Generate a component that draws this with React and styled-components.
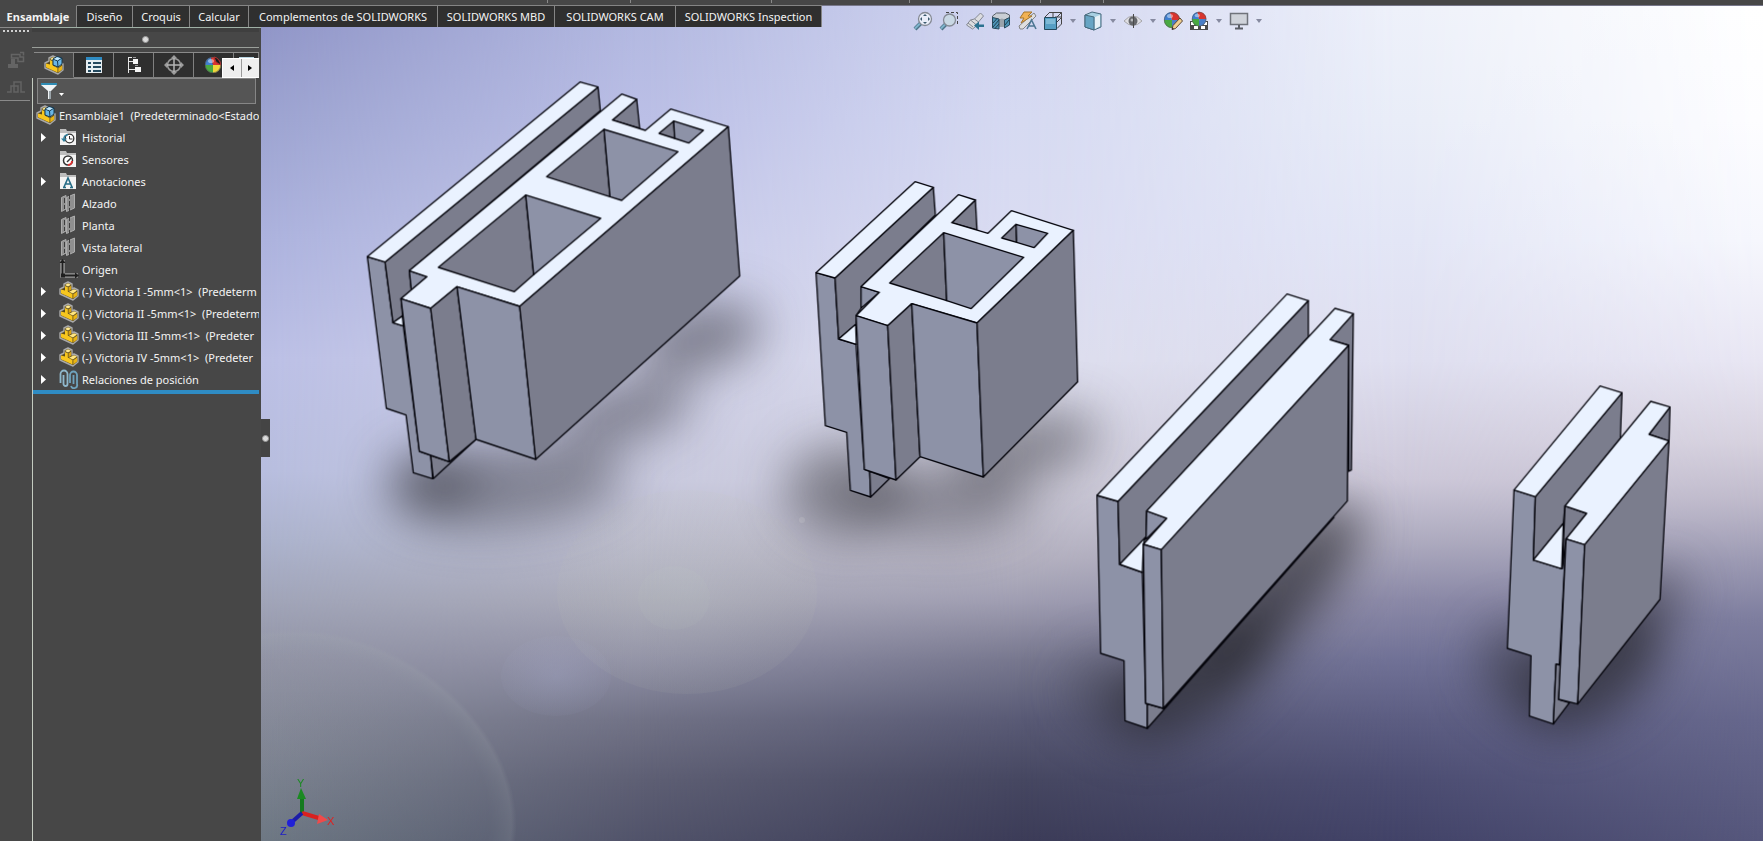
import React from 'react';
import styled, { createGlobalStyle } from 'styled-components';

const GlobalStyle = createGlobalStyle`
  * {
    box-sizing: border-box;
  }
  html, body, #root {
    height: 100%;
  }
  body {
    margin: 0;
    overflow: hidden;
    background: #474747;
    color: #f4f4f4;
    font-family: "Noto Sans", "Open Sans", sans-serif;
    font-size: 11px;
  }
  button, input {
    font: inherit;
    color: inherit;
    border: none;
    padding: 0;
    margin: 0;
    background: transparent;
  }
  svg {
    display: block;
  }
`;

const Window = styled.div`
  display: grid;
  grid-template-columns: 32px 229px minmax(0, 1fr);
  grid-template-rows: 5px 22px minmax(0, 1fr);
  height: 100%;
`;

const RibbonEdge = styled.div`
  grid-area: 1 / 1 / 2 / -1;
  display: flex;
  background: #474747;
`;

const RibbonGroup = styled.span`
  width: ${({ $width }) => $width}px;
  height: 3px;
  border-right: 1px solid #8a8a8a;
`;

const CommandTabs = styled.nav`
  grid-area: 2 / 1 / 3 / -1;
  justify-self: start;
  display: flex;
  z-index: 1;
`;

const CommandTab = styled.button`
  width: ${({ $width }) => $width}px;
  height: 22px;
  border-top: 1px solid ${({ $active }) => ($active ? '#474747' : '#858585')};
  border-right: 1px solid #858585;
  background: ${({ $active }) => ($active ? '#474747' : '#2f2f2f')};
  font-weight: ${({ $active }) => ($active ? 'bold' : 'normal')};
  white-space: nowrap;
`;

const SideToolbar = styled.div`
  grid-area: 3 / 1 / 4 / 2;
  display: flex;
  flex-direction: column;
  align-items: center;
  border-top: 1px solid #8a8a8a;
`;

const Grip = styled.div`
  width: 27px;
  height: 2px;
  margin-top: 2px;
  margin-bottom: 14px;
  background: repeating-linear-gradient(90deg, #d0d0d0 0 2px, transparent 2px 4px);
`;

const SideButton = styled.button`
  height: 27px;
`;

const SideRule = styled.div`
  align-self: stretch;
  height: 1px;
  margin-right: 2px;
  background: #8a8a8a;
`;

const FeaturePanel = styled.aside`
  grid-area: 3 / 2 / 4 / 3;
  display: flex;
  flex-direction: column;
  padding-right: 2px;
  border-top: 1px solid #9fb0a5;
  overflow: hidden;
`;

const PanelHeader = styled.div`
  display: flex;
  justify-content: center;
  align-items: center;
  height: 20px;
  border-top: 4px solid #3f3f3f;
  border-bottom: 1px solid #9a9f9a;
`;

const Dot = styled.span`
  width: 7px;
  height: 7px;
  border: 1px solid #9a9a9a;
  border-radius: 50%;
  background: #dcdcdc;
`;

const ManagerTabs = styled.div`
  display: flex;
  height: 26px;
  margin-top: 4px;
  margin-left: 2px;
  border-top: 1px solid #8a8a8a;
`;

const ManagerTab = styled.button`
  flex: none;
  display: flex;
  justify-content: center;
  align-items: center;
  width: ${({ $cut }) => ($cut ? 25 : 40)}px;
  border-right: 1px solid #808080;
  border-bottom: 1px solid ${({ $active }) => ($active ? '#474747' : '#808080')};
  background: ${({ $active }) => ($active ? '#474747' : '#2f2f2f')};
  overflow: hidden;
`;

const TabScroll = styled.div`
  display: flex;
  gap: 1px;
  position: absolute;
  left: 222px;
  top: 58px;
  width: 37px;
  height: 20px;
  background: #9a9a9a;
  border: 1px solid #ffffff;
  border-right: none;
`;

const ScrollButton = styled.button`
  flex: 1;
  display: flex;
  justify-content: center;
  align-items: center;
  background: #efefef;
`;

const TreeArea = styled.div`
  flex: 1;
  border-left: 1px solid #c3cbc0;
`;

const FilterBox = styled.label`
  display: flex;
  align-items: center;
  height: 26px;
  margin: 0 3px 0 4px;
  padding-left: 2px;
  border: 1px solid #868686;
  background: #555555;
`;

const FilterInput = styled.input`
  flex: 1;
  min-width: 0;
  height: 20px;
  outline: none;
`;

const Tree = styled.ul`
  margin: 0;
  padding: 0;
  list-style: none;
  border-bottom: 4px solid #2f8cc4;
`;

const TreeRow = styled.li`
  display: flex;
  align-items: center;
  height: 22px;
  padding-left: ${({ $root }) => ($root ? 3 : 8)}px;
  white-space: pre;
  overflow: hidden;
`;

const Expander = styled.button`
  flex: none;
  width: 18px;
  height: 16px;
`;

const RowIcon = styled.span`
  flex: none;
  width: 23px;
`;

const Viewport = styled.main`
  grid-area: 2 / 3 / 4 / 4;
  display: grid;
  grid-template-rows: minmax(0, 1fr);
  grid-template-columns: minmax(0, 1fr);
  border-top: 1px solid #77778a;
  overflow: hidden;
`;

const Scene = styled.svg`
  grid-area: 1 / 1;
  width: 100%;
  height: 100%;
`;

const ViewToolbar = styled.div`
  grid-area: 1 / 1;
  align-self: start;
  z-index: 1;
  display: flex;
  padding-top: 5px;
  padding-left: 43.4%;
`;

const ViewButton = styled.button`
  width: 20px;
  height: 20px;

  & + & {
    margin-left: 6px;
  }
`;

const CaretButton = styled.button`
  display: flex;
  justify-content: center;
  align-items: center;
  width: 20px;
  height: 20px;
`;

const PanelHandle = styled.button`
  grid-area: 3 / 3 / 4 / 4;
  justify-self: start;
  z-index: 1;
  display: flex;
  justify-content: center;
  align-items: center;
  width: 9px;
  height: 38px;
  margin-top: 392px;
  background: #444444;
`;

/* ---------- icons ---------- */

const PartShape = () => (
  <>
    <path d="M1 8 L5 6 L5 3 L9 1 L13 3 L13 8 L15 7 L19 9 L19 15 L14 19 L1 13 Z" fill="#5a4a1c" stroke="#a9a9a9" strokeWidth="1.400" strokeLinejoin="round" />
    <path d="M6 4 L9 2.200 L12 3.800 L9 5.500 Z" fill="#ffe98f" />
    <path d="M6 5 L8.800 6.300 L8.800 10.500 L13.500 13 L13.500 17.500 L2 12.300 L2 8.500 L6 9.500 Z" fill="#f7c61e" />
    <path d="M9.500 6.300 L12.200 4.800 L12.200 8.800 L9.500 10.200 Z" fill="#dba410" />
    <path d="M10 10.800 L15 8.200 L18 9.600 L14 12.400 Z" fill="#ffe680" />
    <path d="M14.300 13.200 L18.200 10.500 L18.200 14.600 L14.300 17.600 Z" fill="#e9b414" />
  </>
);

const PartIcon = () => (
  <svg width="20" height="20" viewBox="0 0 20 20"><PartShape /></svg>
);

const AssemblyIcon = () => (
  <svg width="20" height="20" viewBox="0 0 20 20">
    <PartShape />
    <path d="M9 4 L13 1.500 L18 3 L18 9 L14 12 L9 10 Z" fill="#6bb7e6" stroke="#17384d" />
    <path d="M9 4 L13.500 6 L18 3 M13.500 6 L14 12" fill="none" stroke="#17384d" />
    <path d="M10 4 L13 2.300 L16.800 3.200 L13.500 5.200 Z" fill="#c5e7fa" />
  </svg>
);

const PropertyIcon = () => (
  <svg width="18" height="18" viewBox="0 0 18 18">
    <path d="M1 1h16v16H1z" fill="#e6eef2" />
    <path d="M1 1h16v3H1z" fill="#2f8cc4" />
    <path d="M3 6h3v2H3zM3 10h3v2H3zM3 14h3v2H3zM8 6h8v2H8zM8 10h8v2H8zM8 14h8v2H8z" fill="#23495f" />
  </svg>
);

const ConfigIcon = () => (
  <svg width="18" height="18" viewBox="0 0 18 18">
    <path d="M3.500 1v16M3.500 5.500H9M3.500 13.500H11M3.500 1.500H7" fill="none" stroke="#e6e6e6" />
    <path d="M8 3h5v5H8zM10 11h6v5h-6z" fill="#f5f5f5" />
    <path d="M8 1.500h3M10 9.500h3" stroke="#9a9a9a" />
  </svg>
);

const DimIcon = () => (
  <svg width="20" height="20" viewBox="0 0 20 20" fill="none">
    <circle cx="10" cy="10" r="6.500" stroke="#9c9c9c" strokeWidth="1.500" />
    <path d="M10 1v18M1 10h18" stroke="#b5b5b5" strokeWidth="1.500" />
    <path d="M10 0l3 3H7zM10 20l3-3H7zM0 10l3-3v6zM20 10l-3-3v6z" fill="#9c9c9c" />
  </svg>
);

const Ball = ({ corner = '#f0d73a' }) => (
  <>
    <path d="M9 9 L1 9 A8 8 0 0 1 7 1.200 Z" fill="#3f7fd0" />
    <path d="M9 9 L7 1.200 A8 8 0 0 1 17 9 Z" fill="#d8342f" />
    <path d="M9 9 L1 9 A8 8 0 0 0 9 17 Z" fill="#49a942" />
    <path d="M9 9 L17 9 A8 8 0 0 1 9 17 Z" fill={corner} />
    <circle cx="9" cy="9" r="7.700" fill="none" stroke="#555" strokeOpacity="0.6" />
    <ellipse cx="7" cy="5" rx="3" ry="2" fill="#fff" opacity="0.45" />
  </>
);

const DisplayIcon = () => (
  <svg width="20" height="18" viewBox="0 0 20 18">
    <Ball />
    <path d="M10 1a8 8 0 0 1 6.500 8L12 6z" fill="#1b1b1b" stroke="#b03030" />
  </svg>
);

const CamIcon = () => (
  <svg width="16" height="18" viewBox="0 0 16 18">
    <path d="M1 1h15v3H1z" fill="#b9d5e2" />
    <path d="M1 5h15v12H1z" fill="#8a949a" />
  </svg>
);

const FunnelIcon = () => (
  <svg width="26" height="18" viewBox="0 0 26 18">
    <path d="M1 1h16v2l-6 6v8H8V9L1 3z" fill="#f0f4f6" />
    <path d="M1 1h16v2H1z" fill="#2f8cb4" />
    <path d="M9 9h2v8H9z" fill="#9aa4aa" />
    <path d="M19 11h5l-2.500 3z" fill="#fff" />
  </svg>
);

const Folder = ({ children }) => (
  <svg width="18" height="18" viewBox="0 0 18 18">
    <path d="M1 3V1h6l1 2h9v2H1z" fill="#bdbdbd" />
    <path d="M1 5h16v12H1z" fill="#f3f3f3" />
    {children}
  </svg>
);

const HistoryIcon = () => (
  <Folder>
    <circle cx="10.500" cy="10.500" r="4.300" fill="#fff" stroke="#333" strokeWidth="1.300" />
    <path d="M10.500 8v3h3" fill="none" stroke="#333" />
    <path d="M2 10.500h6l-3 3.500z" fill="#2f7f9c" />
    <path d="M5 11a5 4 0 0 1 4-4.500" fill="none" stroke="#2f7f9c" strokeWidth="1.500" />
  </Folder>
);

const SensorIcon = () => (
  <Folder>
    <circle cx="9" cy="10.500" r="4.500" fill="#fff" stroke="#333" strokeWidth="1.500" />
    <path d="M8 12l4-4" stroke="#333" strokeWidth="1.500" />
    <path d="M13 11a4 4 0 0 1-4 4" fill="none" stroke="#d33" strokeWidth="2" />
  </Folder>
);

const NoteIcon = () => (
  <Folder>
    <path d="M5 15 L9 6 L13 15 M6.500 12 H11.500 M4 15.500h3M11 15.500h3" fill="none" stroke="#256b85" strokeWidth="1.600" />
  </Folder>
);

const PlaneIcon = () => (
  <svg width="18" height="20" viewBox="0 0 18 20">
    <path d="M2.500 4.500 L7 2.500 V16 L2.500 18.500 Z M7.500 4.500 L15.500 1 V15 L7.500 18.500 Z" fill="#8f8f8f" stroke="#adadad" />
    <path d="M5.500 5v11M10.500 1v18" fill="none" stroke="#3c3c3c" strokeDasharray="5 2" />
  </svg>
);

const OriginIcon = () => (
  <svg width="20" height="20" viewBox="0 0 20 20" fill="none">
    <path d="M3.500 1v15.500H19" stroke="#999" strokeWidth="4.500" />
    <path d="M3.500 2v14.500H18" stroke="#1f1f1f" strokeWidth="1.800" />
    <path d="M3.500 0l3 4h-6zM20 16.500l-4-3v6zM2 14.500h4v4H2z" fill="#1f1f1f" />
  </svg>
);

const MateIcon = () => (
  <svg width="20" height="20" viewBox="0 0 20 20" fill="none">
    <path d="M1.500 14V5a3.500 3.500 0 0 1 7 0v10a2 2 0 0 1-4 0V6" stroke="#8fb8cc" strokeWidth="1.800" />
    <path d="M11 14V6a3.500 3.500 0 0 1 7 0v9a3 3 0 0 1-6 2M14.500 6v9" stroke="#6fa3bd" strokeWidth="1.800" />
  </svg>
);

const Triangle = () => (
  <svg width="5" height="9" viewBox="0 0 5 9"><path d="M0 0l5 4.500L0 9z" fill="#fff" /></svg>
);

const Caret = () => (
  <svg width="6" height="4" viewBox="0 0 6 4"><path d="M0 0h6L3 4z" fill="#868aa0" /></svg>
);

const ViewSvg = ({ children }) => (
  <svg width="20" height="20" viewBox="0 0 20 20" fill="none">{children}</svg>
);

const ZoomFitIcon = () => (
  <ViewSvg>
    <path d="M8 12l-6 6" stroke="#4d7488" strokeWidth="4" />
    <path d="M7 12.500l-5 5" stroke="#7fb3cc" strokeWidth="2" />
    <circle cx="12" cy="8" r="6.500" fill="#e9edf8" stroke="#858a94" strokeWidth="1.300" />
    <path d="M12 3l2 2h-4zM12 13l2-2h-4zM7 8l2-2v4zM17 8l-2-2v4z" fill="#3c5a6e" />
  </ViewSvg>
);

const ZoomAreaIcon = () => (
  <ViewSvg>
    <path d="M7 1.500h11.500V14" stroke="#444" strokeDasharray="3 2" />
    <path d="M7 13l-5 5" stroke="#4d7488" strokeWidth="4" />
    <path d="M6 13.500l-4 4" stroke="#7fb3cc" strokeWidth="2" />
    <circle cx="10.500" cy="9" r="6" fill="#c9d8e4" stroke="#858a94" strokeWidth="1.300" />
  </ViewSvg>
);

const PreviousViewIcon = () => (
  <ViewSvg>
    <path d="M1.500 14l4-5 4-1 6-6 3 3-5 6-1 3-5 4z" fill="#dcdde0" stroke="#858993" strokeLinejoin="round" />
    <path d="M5.500 9l6 5M9.500 8l4 3M3 12l5 4" stroke="#858993" />
    <path d="M9 14.500l5-4v3h5v2.500h-5v3z" fill="#2b7290" />
  </ViewSvg>
);

const SectionIcon = () => (
  <ViewSvg>
    <path d="M1.500 5l4-3h9l4 2v3l-5 2H8L1.500 7z" fill="#c9ced4" stroke="#59616a" />
    <path d="M8 9q3-3 5.500 0v7H8z" fill="#9aa3ab" />
    <path d="M1.500 6.500L8 8v10l-6.500-1zM13.500 9l5-2.500V14l-5 3z" fill="#4d93b6" stroke="#294b5e" />
    <path d="M2 12l4-4.500M2 16l6-7M4 17.500l4-4.500M14 14l4-5" stroke="#1f4152" />
  </ViewSvg>
);

const DynamicAnnotationIcon = () => (
  <ViewSvg>
    <path d="M2 15l9-8 6-5 2 3-5 5-8 8-3 0z" fill="#dededf" stroke="#858585" />
    <path d="M7 1h8l-4 4h4L4 12l3-5H3z" fill="#f1b254" stroke="#a5762c" />
    <path d="M10 18l4.500-9L19 18M11.500 15h6" stroke="#4d7793" strokeWidth="1.600" />
  </ViewSvg>
);

const OrientationIcon = () => (
  <ViewSvg>
    <path d="M6 1.500h12.500V13l-4.500 4.500M6.500 1.500L2 6M18.500 1.500L14 6M12 6h6M10 1.500V6M14 11l4-4" stroke="#444" />
    <path d="M1.500 6.500h12v12h-12z" fill="#579fc4" stroke="#24495c" />
    <path d="M3 8h9v5H3z" fill="#7fbad6" />
  </ViewSvg>
);

const DisplayStyleIcon = () => (
  <ViewSvg>
    <path d="M2 4l7-3 9 2v13l-7 3-9-3z" fill="#a8d0e2" stroke="#46697c" />
    <path d="M2 4l9 2v13l-9-3z" fill="#67a5c4" stroke="#46697c" />
    <path d="M12 6l5-2v11l-5 3z" fill="#e6f1f6" />
  </ViewSvg>
);

const EyeIcon = () => (
  <ViewSvg>
    <path d="M1 10q9-10 18 0q-9 9-18 0z" fill="#e0e0e4" stroke="#a5a5aa" />
    <circle cx="10" cy="10" r="4.500" fill="#66686c" />
    <circle cx="9" cy="9" r="1.500" fill="#b8babd" />
    <path d="M10.500 3v14" stroke="#4a4a4a" />
  </ViewSvg>
);

const AppearanceIcon = () => (
  <ViewSvg>
    <Ball corner="#4a7fc8" />
    <path d="M9 18.500l1-4 7-7.500 2.500 3-7 7.500z" fill="#f0cf8e" stroke="#5a4634" />
    <path d="M9 18.500l.5-2 1.500 1.500z" fill="#222" />
  </ViewSvg>
);

const SceneIcon = () => (
  <ViewSvg>
    <path d="M1 10h18v9H1z" fill="#4a4a4a" />
    <path d="M2 11h3v3H2zM15 11h3v3h-3zM5 15h4v3H5zM12 15h4v3h-4z" fill="#fff" />
    <g transform="translate(2 0) scale(0.900)"><Ball corner="#4a7fc8" /></g>
  </ViewSvg>
);

const MonitorIcon = () => (
  <ViewSvg>
    <path d="M1.500 2.500h17v11h-17z" fill="#cfd3da" stroke="#6f737b" strokeWidth="1.500" />
    <path d="M10 14v4M6 17.500h8" stroke="#5a5e66" strokeWidth="2" />
  </ViewSvg>
);

/* ---------- data ---------- */

const ribbonGroups = [548, 83, 141, 138, 82, 49, 63];

const commandTabs = [
  { label: 'Ensamblaje', width: 77, active: true },
  { label: 'Diseño', width: 56 },
  { label: 'Croquis', width: 57 },
  { label: 'Calcular', width: 59 },
  { label: 'Complementos de SOLIDWORKS', width: 189 },
  { label: 'SOLIDWORKS MBD', width: 117 },
  { label: 'SOLIDWORKS CAM', width: 121 },
  { label: 'SOLIDWORKS Inspection', width: 146 },
];

const managerTabs = [
  { label: 'FeatureManager', icon: AssemblyIcon, active: true },
  { label: 'PropertyManager', icon: PropertyIcon },
  { label: 'ConfigurationManager', icon: ConfigIcon },
  { label: 'DimXpertManager', icon: DimIcon },
  { label: 'DisplayManager', icon: DisplayIcon },
  { label: 'CAM', icon: CamIcon, cut: true },
];

const treeItems = [
  { label: 'Historial', icon: HistoryIcon, open: true },
  { label: 'Sensores', icon: SensorIcon },
  { label: 'Anotaciones', icon: NoteIcon, open: true },
  { label: 'Alzado', icon: PlaneIcon },
  { label: 'Planta', icon: PlaneIcon },
  { label: 'Vista lateral', icon: PlaneIcon },
  { label: 'Origen', icon: OriginIcon },
  { label: '(-) Victoria I -5mm<1>  (Predeterm', icon: PartIcon, open: true },
  { label: '(-) Victoria II -5mm<1>  (Predeterm', icon: PartIcon, open: true },
  { label: '(-) Victoria III -5mm<1>  (Predeter', icon: PartIcon, open: true },
  { label: '(-) Victoria IV -5mm<1>  (Predeter', icon: PartIcon, open: true },
  { label: 'Relaciones de posición', icon: MateIcon, open: true },
];

const viewTools = [
  { label: 'Zoom para ajustar', icon: ZoomFitIcon },
  { label: 'Zoom encuadre', icon: ZoomAreaIcon },
  { label: 'Vista previa', icon: PreviousViewIcon },
  { label: 'Vista de sección', icon: SectionIcon },
  { label: 'Anotaciones dinámicas', icon: DynamicAnnotationIcon },
  { label: 'Orientación de vista', icon: OrientationIcon, menu: true },
  { label: 'Estilo de visualización', icon: DisplayStyleIcon, menu: true },
  { label: 'Ocultar/mostrar', icon: EyeIcon, menu: true },
  { label: 'Editar apariencia', icon: AppearanceIcon },
  { label: 'Aplicar escena', icon: SceneIcon, menu: true },
  { label: 'Configuración de vista', icon: MonitorIcon, menu: true },
];

// vertical colour ramps, blended from one x to the next
const skyColumns = [
  { x: 261, stops: [[6, '#8e93c6'], [120, '#9da4d1'], [240, '#adb3de'], [360, '#bcc0e6'], [470, '#b8bedf'], [540, '#acb3cd'], [600, '#a1a5b9'], [660, '#9294a5'], [720, '#868a99'], [841, '#6d7783']] },
  { x: 640, stops: [[6, '#b2b8e0'], [120, '#bbbfe6'], [240, '#c7cae9'], [360, '#cfd0e8'], [480, '#c9cadf'], [540, '#bbbbcd'], [600, '#a9a9b8'], [660, '#8f8fa5'], [720, '#717286'], [780, '#5e5f74'], [841, '#51536a']] },
  { x: 1020, stops: [[6, '#d2d6f1'], [120, '#d6daf2'], [240, '#dadcf2'], [360, '#dddeee'], [480, '#cfcddb'], [560, '#b4b1c0'], [600, '#a09eb2'], [660, '#77778e'], [720, '#595a75'], [780, '#464761'], [841, '#3c3c58']] },
  { x: 1400, stops: [[6, '#eef1fa'], [120, '#e9edf8'], [240, '#e3e6f6'], [360, '#dfdff0'], [480, '#cdc8d9'], [540, '#afacc0'], [600, '#8b89a7'], [660, '#707196'], [720, '#5c5d82'], [780, '#4c4d72'], [841, '#424368']] },
  { x: 1763, stops: [[6, '#ffffff'], [120, '#fdfdff'], [240, '#f6f7fd'], [360, '#e8e6f3'], [440, '#d7d2df'], [500, '#bfbacb'], [560, '#9c9ab3'], [620, '#7d7d9e'], [720, '#66678c'], [841, '#56577c']] },
];

const shadows = [
  [510, 484, 115, 42, -5, 0.42],
  [430, 482, 45, 34, 0, 0.42],
  [625, 412, 68, 28, -15, 0.48],
  [700, 338, 64, 32, -15, 0.5],
  [845, 490, 60, 46, 0, 0.44],
  [940, 500, 90, 36, 0, 0.38],
  [1025, 448, 75, 32, -15, 0.45],
  [1195, 678, 95, 42, -35, 0.68],
  [1280, 592, 115, 38, -48, 0.68],
  [1110, 690, 44, 40, 0, 0.3],
  [1590, 672, 80, 46, -35, 0.68],
  [1640, 612, 55, 30, -45, 0.48],
  [1515, 665, 38, 45, 0, 0.42],
];

const TOP = '#eaf2ff';
const FRONT = '#8d92a7';
const SIDE = '#7b7d8d';

const blocks = [
  {
    name: 'Victoria I', x: 350, y: 70,
    faces: [
      [FRONT, '52,560 105,576 129,758 160,768 208,1144 242,1156 248,1226 190,1208 168,1035 109,1015'],
      [SIDE, '242,1156 298,1175 378,1108 250,1226'],
      [SIDE, '105,576 744,51 751,122 178,602 184,660 153,686 158,738 129,758'],
      [TOP, '129,758 157,738 160,768'],
      [TOP, '52,560 690,36 744,51 105,576'],
      [SIDE, '787,150 860,88 869,175'],
      [FRONT, '178,602 231,620 184,660'],
      [TOP, '178,602 815,72 860,88 787,150 886,181 962,117 1135,170 509,709 321,650 242,715 153,686 231,620'],
      [SIDE, '927,190 971,153 974,205'],
      [FRONT, '971,153 1060,181 1016,219 974,205'],
      [SIDE, '590,320 762,178 780,380'],
      [FRONT, '762,178 984,245 815,391 780,380'],
      [SIDE, '265,592 527,375 551,614 493,665'],
      [FRONT, '527,375 752,445 551,614'],
      [FRONT, '153,686 242,715 298,1175 208,1144'],
      [SIDE, '242,715 321,650 378,1108 298,1175'],
      [FRONT, '321,650 509,709 557,1168 378,1108'],
      [SIDE, '509,709 1135,170 1169,618 557,1168'],
    ],
  },
  {
    name: 'Victoria II', x: 800, y: 170,
    faces: [
      [FRONT, '48,308 105,324 116,507 168,523 193,898 209,904 212,981 151,961 140,787 76,767'],
      [SIDE, '209,904 268,926 212,981'],
      [SIDE, '105,324 400,52 406,135 183,350 183,415 168,437 168,463 116,507'],
      [TOP, '116,507 167,463 169,523'],
      [TOP, '48,308 345,35 400,52 105,324'],
      [SIDE, '455,158 526,90 531,180'],
      [FRONT, '183,350 238,367 183,415'],
      [TOP, '183,350 475,74 526,90 455,158 564,190 634,122 820,181 531,459 335,401 263,467 168,437 238,367'],
      [SIDE, '605,204 648,163 650,217'],
      [FRONT, '648,163 743,190 702,233 650,217'],
      [SIDE, '269,339 431,188 440,392'],
      [FRONT, '431,188 671,262 513,416 440,392'],
      [FRONT, '168,437 263,467 288,930 193,898'],
      [SIDE, '263,467 335,401 360,860 288,930'],
      [FRONT, '335,401 531,459 550,921 360,860'],
      [SIDE, '531,459 820,181 833,635 550,921'],
    ],
  },
  {
    name: 'Victoria III', x: 1080, y: 280,
    faces: [
      [FRONT, '51,646 114,664 119,853 187,877 197,1270 202,1274 202,1345 135,1322 132,1142 62,1120'],
      [SIDE, '202,1272 250,1285 762,712 202,1345'],
      [SIDE, '114,664 685,62 685,170 200,693 198,772 119,853'],
      [TOP, '119,853 196,772 190,793 187,877'],
      [TOP, '51,646 621,42 685,62 114,664'],
      [SIDE, '750,179 820,101 814,570 806,574 806,196'],
      [FRONT, '200,693 260,715 198,778'],
      [TOP, '200,693 765,85 820,101 750,179 806,196 244,809 190,793 260,715'],
      [FRONT, '190,793 244,809 250,1285 197,1270'],
      [SIDE, '244,809 806,196 802,663 250,1285'],
    ],
  },
  {
    name: 'Victoria IV', x: 1480, y: 370,
    faces: [
      [FRONT, '102,360 166,380 160,570 245,596 250,560 258,507 238,884 228,882 220,1062 148,1038 153,857 82,835'],
      [SIDE, '228,882 242,886 236,988 268,998 220,1062'],
      [SIDE, '166,380 426,68 421,205 255,408 250,460 160,570'],
      [TOP, '160,570 250,460 245,596'],
      [TOP, '102,360 360,48 426,68 166,380'],
      [SIDE, '507,193 570,111 567,213'],
      [SIDE, '255,408 320,430 258,507 247,596'],
      [TOP, '255,408 512,94 570,111 507,193 567,213 314,524 258,507 320,430'],
      [FRONT, '258,507 314,524 293,1002 236,988'],
      [SIDE, '314,524 567,213 540,688 293,1002'],
    ],
  },
];

/* ---------- parts ---------- */

const Sky = () => (
  <>
    <defs>
      {skyColumns.map(({ x, stops }, i) => (
        <React.Fragment key={x}>
          <linearGradient id={`sky${i}`} gradientUnits="userSpaceOnUse" x1="0" y1="6" x2="0" y2="841">
            {stops.map(([y, color]) => (
              <stop key={y} offset={(y - 6) / 835} stopColor={color} />
            ))}
          </linearGradient>
          {i > 0 && (
            <>
              <linearGradient id={`fade${i}`} gradientUnits="userSpaceOnUse" x1={skyColumns[i - 1].x} y1="0" x2={x} y2="0">
                <stop offset="0" stopColor="#fff" stopOpacity="0" />
                <stop offset="1" stopColor="#fff" />
              </linearGradient>
              <mask id={`mask${i}`} maskUnits="userSpaceOnUse" x="261" y="6" width="1502" height="835">
                <rect x="261" y="6" width="1502" height="835" fill={`url(#fade${i})`} />
              </mask>
            </>
          )}
        </React.Fragment>
      ))}
    </defs>
    {skyColumns.map(({ x }, i) => (
      <rect
        key={x}
        x="261"
        y="6"
        width="1502"
        height="835"
        fill={`url(#sky${i})`}
        mask={i > 0 ? `url(#mask${i})` : undefined}
      />
    ))}
  </>
);

const Flares = () => (
  <g>
    <defs>
      <radialGradient id="ring">
        <stop offset="0.85" stopColor="#8f9fa0" stopOpacity="0.03" />
        <stop offset="0.97" stopColor="#a4acb0" stopOpacity="0.16" />
        <stop offset="1" stopColor="#a4acb0" stopOpacity="0" />
      </radialGradient>
      <radialGradient id="halo">
        <stop offset="0" stopColor="#c9d2cc" stopOpacity="0.25" />
        <stop offset="1" stopColor="#c0c4b4" stopOpacity="0.11" />
      </radialGradient>
      <radialGradient id="glow">
        <stop offset="0" stopColor="#b0b6dd" stopOpacity="0.35" />
        <stop offset="1" stopColor="#b0b6dd" stopOpacity="0.07" />
      </radialGradient>
    </defs>
    <ellipse cx="335" cy="788" rx="192" ry="146" transform="rotate(30 335 788)" fill="url(#ring)" />
    <ellipse cx="687" cy="592" rx="130" ry="102" fill="url(#halo)" opacity="0.7" />
    <ellipse cx="674" cy="598" rx="36" ry="32" fill="#ccd4cc" opacity="0.07" />
    <ellipse cx="556" cy="676" rx="55" ry="40" fill="url(#glow)" opacity="0.6" />
    <circle cx="802" cy="520" r="3" fill="#fff" opacity="0.2" />
  </g>
);

const Triad = () => (
  <g fontFamily="Liberation Sans" fontSize="11">
    <path d="M302 813V798" stroke="#147a1e" strokeWidth="4" />
    <path d="M301 788l5 11h-9z" fill="#1b8a22" />
    <path d="M302 813l20 6" stroke="#d9201f" strokeWidth="4" />
    <path d="M319 814l9 6-11 4z" fill="#f04a4a" />
    <path d="M302 813l-9 8" stroke="#1c1ca8" strokeWidth="4" />
    <circle cx="291" cy="823" r="4" fill="#2020d8" />
    <text x="297" y="787" fill="#1b8a22">Y</text>
    <text x="327" y="825" fill="#e02020">X</text>
    <text x="280" y="835" fill="#1c1cc8">Z</text>
  </g>
);

const Model = () => (
  <Scene viewBox="261 6 1502 835" preserveAspectRatio="xMinYMin slice" role="img" aria-label="Ensamblaje1">
    <defs>
      <filter id="soft" x="-50%" y="-50%" width="200%" height="200%" colorInterpolationFilters="sRGB">
        <feGaussianBlur stdDeviation="24" />
      </filter>
    </defs>
    <Sky />
    <Flares />
    <g filter="url(#soft)">
      {shadows.map(([cx, cy, rx, ry, angle, opacity]) => (
        <ellipse
          key={`${cx}-${cy}`}
          cx={cx}
          cy={cy}
          rx={rx}
          ry={ry}
          fill="#26262c"
          opacity={opacity}
          transform={`rotate(${angle} ${cx} ${cy})`}
        />
      ))}
    </g>
    {blocks.map(({ name, x, y, faces }) => (
      <g key={name} transform={`translate(${x} ${y}) scale(0.33333)`} stroke="#05050c" strokeWidth="4" strokeLinejoin="round">
        {faces.map(([fill, points]) => (
          <polygon key={points} fill={fill} points={points} />
        ))}
      </g>
    ))}
    <Triad />
  </Scene>
);

const FeatureTree = () => (
  <Tree>
    <TreeRow $root>
      <RowIcon><AssemblyIcon /></RowIcon>
      Ensamblaje1  (Predeterminado&lt;Estado
    </TreeRow>
    {treeItems.map(({ label, icon: Icon, open }) => (
      <TreeRow key={label}>
        <Expander aria-label={open ? `Expandir ${label}` : undefined} disabled={!open}>
          {open && <Triangle />}
        </Expander>
        <RowIcon><Icon /></RowIcon>
        {label}
      </TreeRow>
    ))}
  </Tree>
);

const App = () => {
  return (
    <>
      <GlobalStyle />
      <Window>
        <RibbonEdge>
          {ribbonGroups.map((width) => <RibbonGroup key={width} $width={width} />)}
        </RibbonEdge>
        <CommandTabs>
          {commandTabs.map(({ label, width, active }) => (
            <CommandTab key={label} $width={width} $active={active}>{label}</CommandTab>
          ))}
        </CommandTabs>
        <SideToolbar>
          <Grip />
          <SideButton aria-label="Insertar componente">
            <svg width="18" height="18" viewBox="0 0 18 18" fill="#646464">
              <path d="M1 13h10v4H1zM4 8h4v5H4z" />
              <path d="M4.500 7V3.500H13V6h3.500v4.500H11V7zM13 1.500h3.500v3" fill="none" stroke="#646464" strokeWidth="1.500" />
            </svg>
          </SideButton>
          <SideButton aria-label="Relación de posición">
            <svg width="20" height="14" viewBox="0 0 20 14">
              <path d="M1 12h4V6h3V2h7v10h4M8 12V6h4v6z" fill="none" stroke="#636363" strokeWidth="1.500" />
            </svg>
          </SideButton>
          <SideRule />
        </SideToolbar>
        <FeaturePanel>
          <PanelHeader><Dot /></PanelHeader>
          <ManagerTabs>
            {managerTabs.map(({ label, icon: Icon, active, cut }) => (
              <ManagerTab key={label} aria-label={label} $active={active} $cut={cut}><Icon /></ManagerTab>
            ))}
            <TabScroll>
              <ScrollButton aria-label="Anterior">
                <svg width="4" height="6" viewBox="0 0 4 6"><path d="M4 0v6L0 3z" fill="#000" /></svg>
              </ScrollButton>
              <ScrollButton aria-label="Siguiente">
                <svg width="4" height="6" viewBox="0 0 4 6"><path d="M0 0v6l4-3z" fill="#000" /></svg>
              </ScrollButton>
            </TabScroll>
          </ManagerTabs>
          <TreeArea>
            <FilterBox>
              <FunnelIcon />
              <FilterInput type="text" aria-label="Filtro" />
            </FilterBox>
            <FeatureTree />
          </TreeArea>
        </FeaturePanel>
        <Viewport>
          <Model />
          <ViewToolbar>
            {viewTools.map(({ label, icon: Icon, menu }) => (
              <React.Fragment key={label}>
                <ViewButton aria-label={label}><Icon /></ViewButton>
                {menu && <CaretButton aria-label={`${label}: opciones`}><Caret /></CaretButton>}
              </React.Fragment>
            ))}
          </ViewToolbar>
        </Viewport>
        <PanelHandle aria-label="Contraer panel"><Dot /></PanelHandle>
      </Window>
    </>
  );
};

export default App;
